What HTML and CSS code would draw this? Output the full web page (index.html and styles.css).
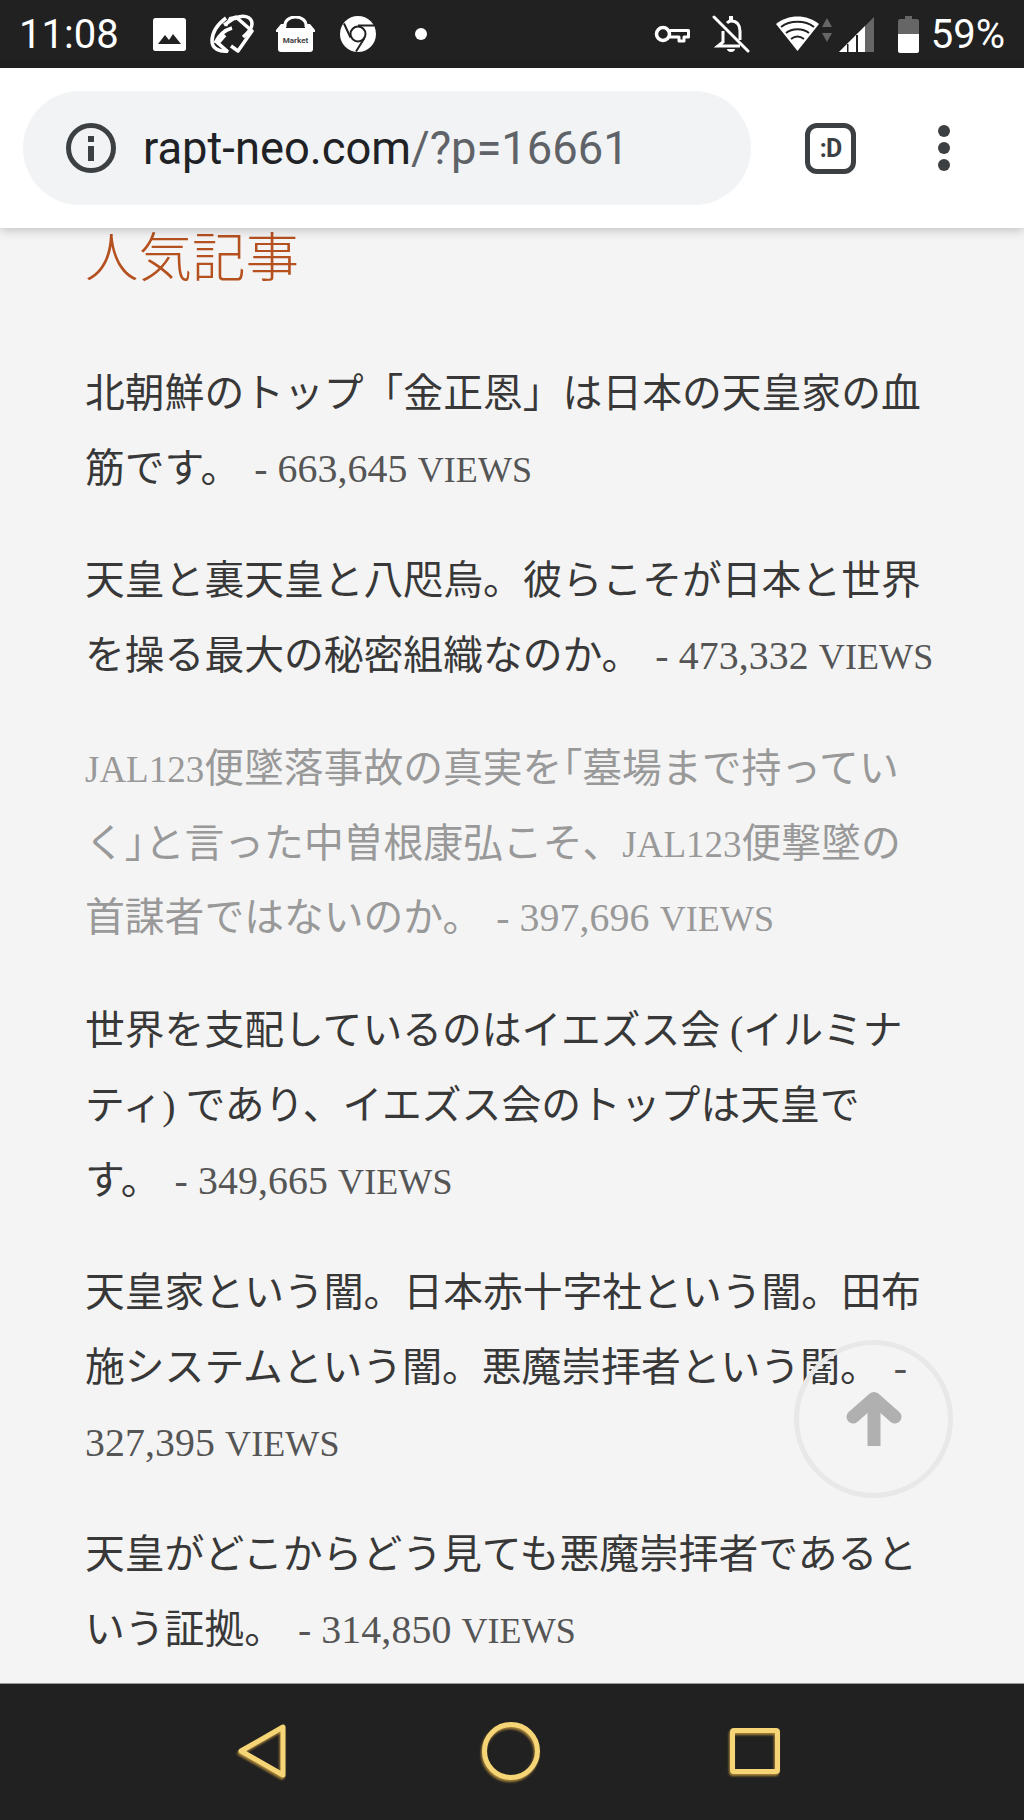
FILE: index.html
```html
<!DOCTYPE html>
<html lang="ja">
<head>
    <meta charset="UTF-8">
    <meta name="viewport" content="width=device-width, initial-scale=1.0">
    <title>人気記事 - RAPT</title>
    <link rel="stylesheet" href="styles.css">
</head>
<body>
    <div class="status-bar">
        <span class="status-time">11:08</span>
        <div class="status-icons">
            <svg class="icon-image" width="33" height="33" viewBox="0 0 33 33">
                <rect width="33" height="33" rx="2.5" fill="#fff"/>
                <path d="M5 26l7-9 4 5 4-6 8 10z" fill="#212121"/>
            </svg>
            <svg class="icon-orbit" width="44" height="42" viewBox="0 0 44 42" fill="none" stroke="#fff">
                <path d="M14 12L26 4l16 14-14 20-7-5" stroke-width="3.5" stroke-linejoin="round"/>
                <path d="M16 5C8 11 2 19 2 28c0 8 8 11 16 10" stroke-width="3.5"/>
                <path d="M24 6c8-5 18-3 18 5 0 5-4 9-9 13" stroke-width="3.5"/>
                <path d="M5 30c4-8 10-13 17-15M15 22l-7 8 10 9" stroke-width="3.5"/>
                <path d="M16 13l4-8 5-1" stroke-width="2.5"/>
            </svg>
            <svg class="icon-market" width="39" height="36" viewBox="0 0 39 36">
                <path d="M9 11V9c0-4 4-8 10.500-8S30 5 30 9v2" fill="none" stroke="#fff" stroke-width="3"/>
                <path d="M5 8h5v4h19V8h5l5 6v2H0v-2z" fill="#fff"/>
                <path d="M2 16h35v17c0 2-1 3-3 3H5c-2 0-3-1-3-3z" fill="#fff"/>
                <text x="19.500" y="27" class="market-label" text-anchor="middle">Market</text>
            </svg>
            <svg class="icon-chrome" width="36" height="36" viewBox="0 0 36 36">
                <circle cx="18" cy="18" r="18" fill="#fff"/>
                <circle cx="18" cy="18" r="7.500" fill="none" stroke="#212121" stroke-width="2"/>
                <path d="M18 9.500h16M10.500 21.500L4 7.500M24.500 22L16 35.500" stroke="#212121" stroke-width="2" fill="none"/>
            </svg>
            <span class="status-dot"></span>
        </div>
        <div class="status-system">
            <svg width="36" height="20" viewBox="0 0 36 20" fill="none" stroke="#fff" stroke-width="3.500">
                <circle cx="9" cy="10" r="6.500"/>
                <path d="M15.500 6.500H34.500V13H30V17H25V13H15.500" stroke-width="3" stroke-linejoin="round"/>
            </svg>
            <svg class="icon-bell" width="38" height="38" viewBox="0 0 38 38" fill="none" stroke="#fff" stroke-width="3">
                <path d="M11 16v11l-5 4h22M15 8c1-1 2-2 4-2 6 0 9 4 9 10v9"/>
                <path d="M19 1v4" stroke-width="4"/>
                <path d="M15 34c0 4 8 4 8 0z" fill="#fff" stroke="none"/>
                <path d="M2 2l34 34" stroke-linecap="round"/>
            </svg>
            <svg class="icon-wifi" width="57" height="36" viewBox="0 0 57 36">
                <path d="M21.500 35L0 8C12-2 31-2 43 8z" fill="#fff"/>
                <path d="M5 11c9-7 24-7 33 0M10 17c6-5 17-5 23 0M15 23c4-3 9-3 13 0" fill="none" stroke="#212121" stroke-width="2"/>
                <path d="M51 2l5 9H46zM51 26l5-9H46z" fill="#666"/>
            </svg>
            <svg class="icon-signal" width="35" height="35" viewBox="0 0 35 35">
                <path d="M0 35L35 0V35z" fill="#666"/>
                <path d="M0 35L26 9V35z" fill="#fff"/>
                <path d="M8 27h1.500v8H8zM17 18h2v17h-2z" fill="#212121"/>
            </svg>
            <svg class="icon-battery" width="21" height="37" viewBox="0 0 21 37">
                <path d="M7 0h7v3h5c1 0 2 1 2 2v14H0V5c0-1 1-2 2-2h5z" fill="#666"/>
                <path d="M0 18h21v17c0 1-1 2-2 2H2c-1 0-2-1-2-2z" fill="#fff"/>
            </svg>
            <span class="status-battery">59%</span>
        </div>
    </div>

    <header class="toolbar">
        <div class="omnibox">
            <svg class="icon-info" width="50" height="50" viewBox="0 0 50 50">
                <circle cx="25" cy="25" r="22.500" fill="none" stroke="#3c4043" stroke-width="5"/>
                <path d="M22 13h6v6h-6zM22 23h6v15h-6z" fill="#3c4043"/>
            </svg>
            <span class="url"><span class="url-host">rapt-neo.com</span>/?p=16661</span>
        </div>
        <div class="tab-count">:D</div>
        <div class="menu-dots"><span></span><span></span><span></span></div>
    </header>

    <main class="content">
        <h2 class="section-title">人気記事</h2>
        <ul class="popular-list">
            <li><a href="#">北朝鮮のトップ「金正恩」は日本の天皇家の血筋です。</a> <span class="views">- 663,645 <span class="views-unit">VIEWS</span></span></li>
            <li><a href="#">天皇と裏天皇と八咫烏。彼らこそが日本と世界を操る最大の秘密組織なのか。</a> <span class="views">- 473,332 <span class="views-unit">VIEWS</span></span></li>
            <li class="is-pressed"><a href="#"><span class="latin">JAL123</span>便墜落事故の真実を｢墓場まで持っていく｣と言った中曽根康弘こそ、<span class="latin">JAL123</span>便撃墜の首謀者ではないのか。</a> <span class="views">- 397,696 <span class="views-unit">VIEWS</span></span></li>
            <li><a href="#">世界を支配しているのはイエズス会 (イルミナティ) であり、イエズス会のトップは天皇で<br>す。</a> <span class="views">- 349,665 <span class="views-unit">VIEWS</span></span></li>
            <li><a href="#">天皇家という闇。日本赤十字社という闇。田布施システムという闇。悪魔崇拝者という闇。</a> <span class="views">- 327,395 <span class="views-unit">VIEWS</span></span></li>
            <li><a href="#">天皇がどこからどう見ても悪魔崇拝者であるという証拠。</a> <span class="views">- 314,850 <span class="views-unit">VIEWS</span></span></li>
        </ul>
        <a class="back-to-top" href="#">
            <svg width="56" height="54" viewBox="0 0 56 54" fill="none" stroke="#b0b0b0" stroke-width="13" stroke-linecap="round" stroke-linejoin="round">
                <path d="M7 25L28 6.500 49 25"/>
                <path d="M28 10v37.500" stroke-linecap="square"/>
            </svg>
        </a>
    </main>

    <nav class="nav-bar">
        <svg class="nav-back" width="48" height="54" viewBox="0 0 48 54" fill="none">
            <path d="M45 3V51L3 27z" stroke-width="5" stroke-linejoin="round"/>
        </svg>
        <svg class="nav-home" width="58" height="58" viewBox="0 0 58 58" fill="none">
            <circle cx="29" cy="29" r="26.500" stroke-width="5"/>
        </svg>
        <svg class="nav-recent" width="50" height="46" viewBox="0 0 50 46" fill="none">
            <rect x="2.500" y="2.500" width="45" height="41" rx="1.500" stroke-width="5"/>
        </svg>
    </nav>
</body>
</html>
```

FILE: styles.css
```css
* {
    box-sizing: border-box;
}

body {
    margin: 0;
    height: 1820px;
    display: flex;
    flex-direction: column;
    overflow: hidden;
    font-family: "Liberation Serif", "Noto Sans CJK JP", serif;
    background-color: #f4f4f4;
    color: #383838;
}

/* status bar */
.status-bar {
    height: 68px;
    flex: none;
    display: flex;
    align-items: center;
    padding: 0 19px;
    background-color: #212121;
    color: #fff;
    font-family: Roboto, sans-serif;
}

.status-time {
    font-size: 40px;
    width: 134px;
}

.status-icons {
    display: flex;
    align-items: center;
}

.icon-orbit {
    margin-left: 24px;
}

.icon-market {
    margin-left: 22px;
}

.icon-chrome {
    margin-left: 25px;
}

.market-label {
    font-family: Roboto, sans-serif;
    font-size: 8px;
    font-weight: 700;
    fill: #444;
}

.status-dot {
    width: 12px;
    height: 12px;
    margin-left: 39px;
    border-radius: 50%;
    background-color: #fff;
}

.status-system {
    margin-left: auto;
    display: flex;
    align-items: center;
}

.icon-bell {
    margin-left: 22px;
}

.icon-wifi {
    margin-left: 26px;
}

.icon-signal {
    margin-left: 6px;
}

.icon-battery {
    margin-left: 24px;
}

.status-battery {
    margin-left: 12px;
    font-size: 40px;
}

/* toolbar */
.toolbar {
    position: relative;
    z-index: 2;
    height: 160px;
    flex: none;
    display: flex;
    align-items: center;
    padding-left: 23px;
    background-color: #fff;
    box-shadow: 0 2px 10px rgba(0, 0, 0, 0.22);
}

.omnibox {
    width: 728px;
    height: 114px;
    display: flex;
    align-items: center;
    padding-left: 43px;
    border-radius: 57px;
    background-color: #f1f3f4;
}

.url {
    margin-left: 27px;
    font-family: Roboto, sans-serif;
    font-size: 45.3px;
    color: #5f6368;
}

.url-host {
    color: #202124;
}

.tab-count {
    width: 51px;
    height: 51px;
    margin-left: 54px;
    display: flex;
    align-items: center;
    justify-content: center;
    border: 5px solid #3c4043;
    border-radius: 12px;
    font-family: Roboto, sans-serif;
    font-size: 25px;
    font-weight: 700;
    letter-spacing: -1px;
    color: #3c4043;
}

.menu-dots {
    margin-left: 82px;
    display: flex;
    flex-direction: column;
    gap: 5px;
}

.menu-dots span {
    width: 12px;
    height: 12px;
    border-radius: 50%;
    background-color: #3c4043;
}

/* content */
.content {
    position: relative;
    flex: 1;
    min-height: 0;
    overflow: hidden;
    padding: 0 88px 0 85px;
}

.section-title {
    margin: 3px 0 70px;
    font-size: 53.5px;
    font-weight: 300;
    line-height: 56px;
    color: #b5501f;
}

.popular-list {
    list-style: none;
    margin: 0;
    padding: 0;
    font-size: 39.8px;
    line-height: 74.8px;
}

.popular-list li {
    margin-bottom: 37.8px;
}

.popular-list a {
    color: #383838;
    text-decoration: none;
}

.latin {
    font-size: 37px;
    line-height: 1;
}

.views {
    margin-left: 4px;
    letter-spacing: 0.1px;
    color: #555;
}

.views-unit {
    font-size: 36px;
    line-height: 1;
}

.is-pressed a,
.is-pressed .views {
    color: #999;
}

.back-to-top {
    position: absolute;
    left: 794px;
    top: 1112px;
    width: 159px;
    height: 158px;
    display: flex;
    align-items: center;
    justify-content: center;
    border: 5px solid #e8e8e8;
    border-radius: 50%;
}

/* nav bar */
.nav-bar {
    height: 137px;
    flex: none;
    display: flex;
    align-items: center;
    padding: 0 0 2px 238px;
    background-color: #212121;
    border-top: 1px solid #999;
}

.nav-bar svg {
    stroke: #f5d576;
    filter: drop-shadow(-1px 2px 1px #a9843a);
}

.nav-home {
    margin-left: 196px;
}

.nav-recent {
    margin-left: 190px;
}
```
